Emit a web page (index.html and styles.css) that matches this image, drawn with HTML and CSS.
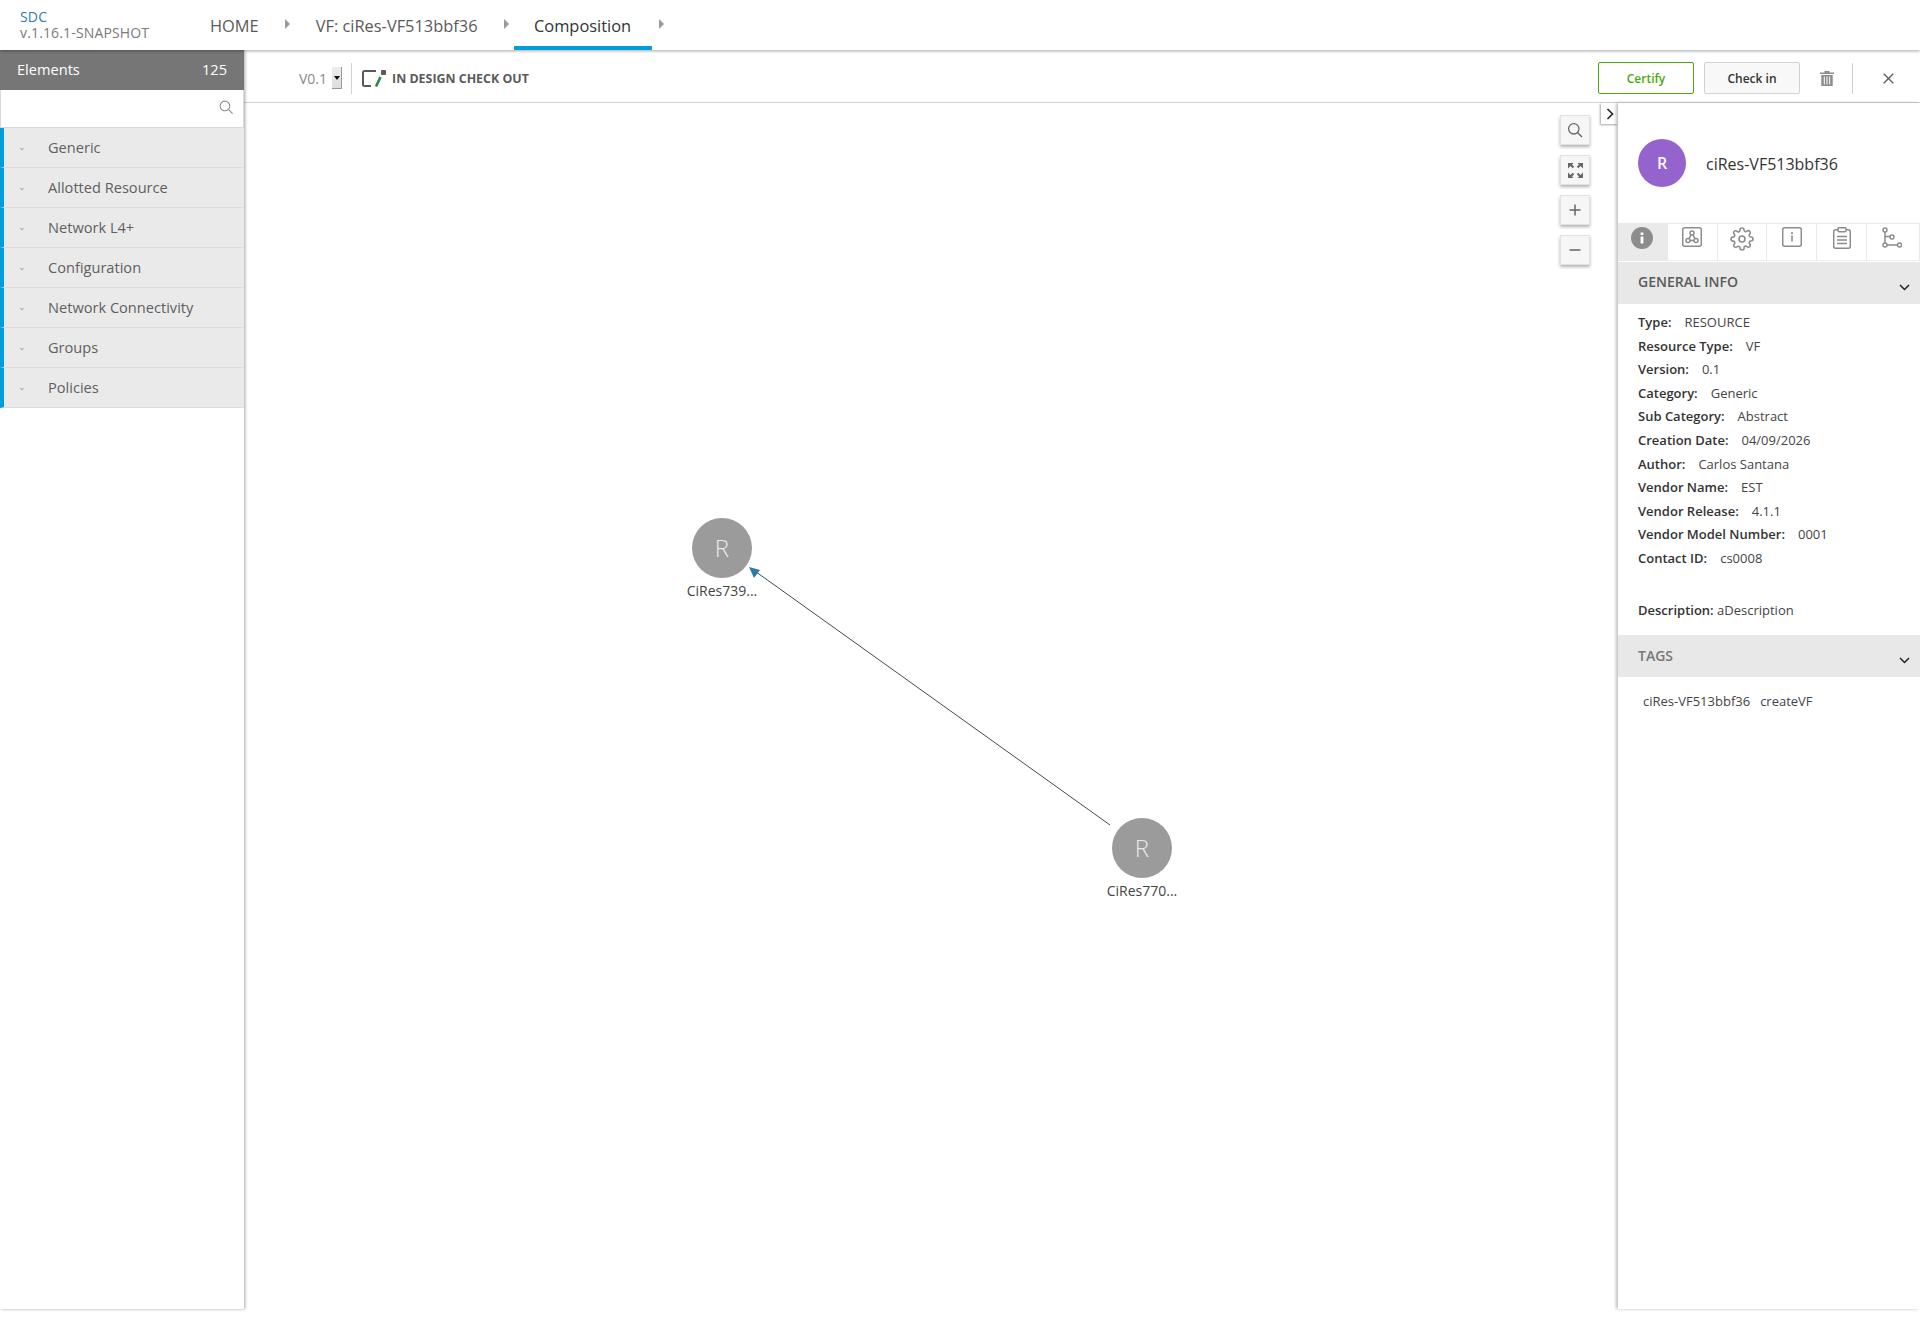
FILE: index.html
```html
<!DOCTYPE html>
<html lang="en">
<head>
    <meta charset="UTF-8">
    <title>SDC</title>
    <link rel="stylesheet" href="styles.css">
</head>
<body>
    <div class="top-nav">
        <div class="brand">
            <div class="brand-name">SDC</div>
            <div class="brand-version">v.1.16.1-SNAPSHOT</div>
        </div>
        <div class="crumb">HOME</div>
        <span class="crumb-arrow"></span>
        <div class="crumb">VF: ciRes-VF513bbf36</div>
        <span class="crumb-arrow crumb-arrow-tight"></span>
        <div class="crumb crumb-active">Composition</div>
        <span class="crumb-arrow crumb-arrow-last"></span>
    </div>

    <div class="workspace">
        <div class="palette">
            <div class="palette-header">
                <span>Elements</span>
                <span>125</span>
            </div>
            <div class="palette-search">
                <svg width="14" height="14" viewBox="0 0 16 16"><circle cx="6.8" cy="6.8" r="5.5" fill="none" stroke="#8c8c8c" stroke-width="1.2"/><path d="M10.8 10.8 15.5 15.5" stroke="#8c8c8c" stroke-width="1.3"/></svg>
            </div>
            <div class="palette-group"><span class="group-caret">&#8964;</span>Generic</div>
            <div class="palette-group"><span class="group-caret">&#8964;</span>Allotted Resource</div>
            <div class="palette-group"><span class="group-caret">&#8964;</span>Network L4+</div>
            <div class="palette-group"><span class="group-caret">&#8964;</span>Configuration</div>
            <div class="palette-group"><span class="group-caret">&#8964;</span>Network Connectivity</div>
            <div class="palette-group"><span class="group-caret">&#8964;</span>Groups</div>
            <div class="palette-group"><span class="group-caret">&#8964;</span>Policies</div>
        </div>

        <div class="main">
            <div class="toolbar">
                <span class="version">V0.1</span>
                <span class="version-select"></span>
                <span class="toolbar-sep"></span>
                <svg class="state-icon" width="24" height="17" viewBox="0 0 24 17">
                    <path d="M14 1H2.5A1.5 1.5 0 0 0 1 2.5v12A1.5 1.5 0 0 0 2.5 16H9" fill="none" stroke="#5a5a5a" stroke-width="2"/>
                    <rect x="19" y="0" width="5" height="5" rx="1" fill="#5a5a5a"/>
                    <path d="M18.5 7 14 16.5" stroke="#1f8a4c" stroke-width="2.6"/>
                </svg>
                <span class="state-label">IN DESIGN CHECK OUT</span>
                <span class="toolbar-fill"></span>
                <button class="btn btn-certify">Certify</button>
                <button class="btn btn-checkin">Check in</button>
                <svg class="trash-icon" width="14" height="16" viewBox="0 0 14 16"><path d="M0 2.5h14v1.6H0zM4.5 1h5v1.5h-5zM1.3 5h11.4v11H1.3z" fill="#8c8c8c"/><path d="M4.3 6.5v8M7 6.5v8M9.7 6.5v8" stroke="#fff" stroke-width="1"/></svg>
                <span class="toolbar-sep toolbar-sep-right"></span>
                <svg width="11" height="11" viewBox="0 0 11 11"><path d="M.7.7l9.6 9.6M10.3.7.7 10.3" stroke="#5a5a5a" stroke-width="1.3"/></svg>
            </div>

            <div class="content">
                <div class="canvas">
                    <svg class="edges" width="1374" height="1206">
                        <line x1="866" y1="722" x2="508" y2="466" stroke="#3f4a52" stroke-width="1"/>
                        <path d="M505 464 516 467 510 475z" fill="#2d7aa3"/>
                    </svg>
                    <div class="node node-a"><div class="node-circle">R</div><div class="node-label">CiRes739...</div></div>
                    <div class="node node-b"><div class="node-circle">R</div><div class="node-label">CiRes770...</div></div>

                    <div class="zoom-tools">
                        <div class="zoom-btn"><svg width="16" height="16" viewBox="0 0 16 16"><circle cx="6.8" cy="6.8" r="5.2" fill="none" stroke="#666" stroke-width="1.3"/><path d="M10.7 10.7 15 15" stroke="#666" stroke-width="1.4"/></svg></div>
                        <div class="zoom-btn"><svg width="15" height="15" viewBox="0 0 15 15" fill="#666"><path d="M0 0h5.500L4 1.500l2.200 2.200-1.500 1.500L2.500 3 0 5.500zM15 0H9.500L11 1.500 8.800 3.700l1.500 1.500L12.500 3 15 5.500zM0 15h5.500L4 13.500l2.200-2.200-1.500-1.500L2.500 12 0 9.500zM15 15H9.500l1.500-1.500-2.200-2.200 1.500-1.500 2.200 2.200L15 9.500z"/></svg></div>
                        <div class="zoom-btn"><svg width="12" height="12" viewBox="0 0 12 12"><path d="M6 .5v11M.5 6h11" stroke="#666" stroke-width="1.5"/></svg></div>
                        <div class="zoom-btn"><svg width="12" height="12" viewBox="0 0 12 12"><path d="M.5 6h11" stroke="#666" stroke-width="1.5"/></svg></div>
                    </div>
                    <div class="collapse-tab"><svg width="8" height="12" viewBox="0 0 8 12"><path d="M1.5 1 6.5 6l-5 5" fill="none" stroke="#222" stroke-width="1.6"/></svg></div>
                </div>

                <div class="details">
                    <div class="details-title">
                        <div class="avatar">R</div>
                        <div class="details-name">ciRes-VF513bbf36</div>
                    </div>
                    <div class="tabs">
                        <div class="tab tab-active">
                            <svg width="22" height="22" viewBox="0 0 22 22"><circle cx="11" cy="11" r="11" fill="#8c8c8c"/><path d="M9.6 9.5h2.8v7H9.6zM9.6 5.5h2.8v2.6H9.6z" fill="#fff"/></svg>
                        </div>
                        <div class="tab">
                            <svg width="20" height="20" viewBox="0 0 20 20" fill="none" stroke="#8c8c8c" stroke-width="1.5"><rect x=".7" y=".7" width="18.6" height="18.6" rx="2"/><circle cx="10" cy="6" r="2"/><circle cx="6" cy="13.5" r="2"/><circle cx="14" cy="13.5" r="2"/><path d="M9 7.8 7 11.8M11 7.800l2 4M8 13.500h4"/></svg>
                        </div>
                        <div class="tab">
                            <svg width="24" height="24" viewBox="0 0 24 24" fill="none" stroke="#8c8c8c" stroke-width="1.6"><circle cx="12" cy="12" r="3"/><path d="M19.4 15a1.65 1.65 0 0 0 .33 1.82l.06.06a2 2 0 0 1 0 2.83 2 2 0 0 1-2.83 0l-.06-.06a1.65 1.65 0 0 0-1.82-.33 1.65 1.65 0 0 0-1 1.51V21a2 2 0 0 1-2 2 2 2 0 0 1-2-2v-.09A1.65 1.65 0 0 0 9 19.4a1.65 1.65 0 0 0-1.82.33l-.06.06a2 2 0 0 1-2.83 0 2 2 0 0 1 0-2.83l.06-.06a1.65 1.65 0 0 0 .33-1.82 1.65 1.65 0 0 0-1.51-1H3a2 2 0 0 1-2-2 2 2 0 0 1 2-2h.09A1.65 1.65 0 0 0 4.6 9a1.65 1.65 0 0 0-.33-1.82l-.06-.06a2 2 0 0 1 0-2.83 2 2 0 0 1 2.83 0l.06.06a1.65 1.65 0 0 0 1.82.33H9a1.65 1.65 0 0 0 1-1.51V3a2 2 0 0 1 2-2 2 2 0 0 1 2 2v.09a1.65 1.65 0 0 0 1 1.51 1.65 1.65 0 0 0 1.82-.33l.06-.06a2 2 0 0 1 2.83 0 2 2 0 0 1 0 2.83l-.06.06a1.65 1.65 0 0 0-.33 1.82V9a1.65 1.65 0 0 0 1.51 1H21a2 2 0 0 1 2 2 2 2 0 0 1-2 2h-.09a1.65 1.65 0 0 0-1.51 1z"/></svg>
                        </div>
                        <div class="tab">
                            <svg width="20" height="20" viewBox="0 0 20 20" fill="none" stroke="#8c8c8c" stroke-width="1.5"><rect x=".7" y=".7" width="18.6" height="18.6" rx="2"/><path d="M10 8.5v6M10 5v2" stroke-width="1.6"/></svg>
                        </div>
                        <div class="tab">
                            <svg width="18" height="22" viewBox="0 0 18 22" fill="none" stroke="#8c8c8c" stroke-width="1.5"><rect x=".7" y="2.7" width="16.6" height="18.6" rx="2"/><rect x="5" y=".7" width="8" height="4" rx="1" fill="#fff"/><path d="M4 9.5h10M4 13h10M4 16.500h10"/></svg>
                        </div>
                        <div class="tab tab-branch">
                            <svg width="20" height="22" viewBox="0 0 20 22" fill="none" stroke="#8c8c8c" stroke-width="1.5"><circle cx="3" cy="3" r="2"/><circle cx="3" cy="18" r="2"/><circle cx="10" cy="10" r="2"/><circle cx="17.5" cy="18" r="2"/><path d="M3 5v11M3 9.500h5M5 18h10.500"/></svg>
                        </div>
                    </div>

                    <div class="section-header section-general">GENERAL INFO<svg class="chevron" width="11" height="7" viewBox="0 0 11 7"><path d="M1 1l4.5 4.5L10 1" fill="none" stroke="#222" stroke-width="1.5"/></svg></div>
                    <div class="info">
                        <div class="info-row"><b>Type:</b>RESOURCE</div>
                        <div class="info-row"><b>Resource Type:</b>VF</div>
                        <div class="info-row"><b>Version:</b>0.1</div>
                        <div class="info-row"><b>Category:</b>Generic</div>
                        <div class="info-row"><b>Sub Category:</b>Abstract</div>
                        <div class="info-row"><b>Creation Date:</b>04/09/2026</div>
                        <div class="info-row"><b>Author:</b>Carlos Santana</div>
                        <div class="info-row"><b>Vendor Name:</b>EST</div>
                        <div class="info-row"><b>Vendor Release:</b>4.1.1</div>
                        <div class="info-row"><b>Vendor Model Number:</b>0001</div>
                        <div class="info-row"><b>Contact ID:</b>cs0008</div>
                        <div class="info-desc"><b>Description:</b> aDescription</div>
                    </div>
                    <div class="section-header section-tags">TAGS<svg class="chevron" width="11" height="7" viewBox="0 0 11 7"><path d="M1 1l4.5 4.5L10 1" fill="none" stroke="#222" stroke-width="1.5"/></svg></div>
                    <div class="tags"><span>ciRes-VF513bbf36</span><span>createVF</span></div>
                </div>
            </div>
        </div>
    </div>
</body>
</html>
```
FILE: styles.css
```css
* {
    box-sizing: border-box;
}
html, body {
    margin: 0;
    height: 100%;
}
body {
    font-family: "Open Sans", sans-serif;
    background-color: #fff;
    color: #333;
    overflow: hidden;
}
.top-nav {
    display: flex;
    align-items: flex-start;
    height: 50px;
    padding-left: 20px;
    background-color: #fff;
    box-shadow: 0 1px 3px rgba(0,0,0,0.35);
    position: relative;
    z-index: 3;
}
.brand {
    width: 190px;
    padding-top: 9px;
    font-size: 14px;
    line-height: 16px;
    letter-spacing: 0.15px;
    white-space: nowrap;
}
.brand-name {
    color: #2f7ab8;
}
.brand-version {
    color: #7a7a7a;
}
.crumb {
    height: 50px;
    line-height: 52px;
    font-size: 16.4px;
    color: #5a5a5a;
}
.crumb-active {
    width: 138px;
    text-align: center;
    color: #333;
    font-weight: 500;
    border-bottom: 4px solid #009fdb;
}
.crumb-arrow {
    width: 0;
    height: 0;
    margin: 19px 26px 0 26px;
    border-left: 5px solid #999;
    border-top: 5px solid transparent;
    border-bottom: 5px solid transparent;
}
.crumb-arrow-tight {
    margin-right: 5px;
}
.crumb-arrow-last {
    margin-left: 7px;
}
.workspace {
    display: flex;
    height: 1259px;
}
.palette {
    width: 244px;
    flex-shrink: 0;
    box-shadow: 1px 0 3px rgba(0,0,0,0.35);
    position: relative;
    z-index: 2;
    background-color: #fff;
}
.palette-header {
    display: flex;
    justify-content: space-between;
    height: 40px;
    padding: 8px 17px;
    background-color: #767676;
    color: #fff;
    font-size: 14.6px;
    line-height: 22px;
}
.palette-search {
    display: flex;
    justify-content: flex-end;
    align-items: center;
    height: 38px;
    padding: 0 10px 4px 0;
    border: 1px solid #d8d8d8;
    border-top: 0;
}
.palette-group {
    height: 40px;
    line-height: 39px;
    border-left: 4px solid #009fdb;
    border-bottom: 1px solid #dcdcdc;
    background-color: #eaeaea;
    color: #5f5f5f;
    font-size: 14.6px;
    font-weight: 500;
    display: flex;
}
.group-caret {
    width: 44px;
    padding-left: 14px;
    font-size: 9px;
    line-height: 38px;
    color: #999;
}
.main {
    flex: 1;
    display: flex;
    flex-direction: column;
    min-width: 0;
}
.toolbar {
    display: flex;
    align-items: center;
    height: 53px;
    padding: 4px 26px 0 55px;
    border-bottom: 1px solid #d2d2d2;
}
.version {
    font-size: 14px;
    color: #8a8a8a;
    margin-right: 5px;
}
.version-select {
    width: 10px;
    height: 22px;
    background: linear-gradient(#eee, #ddd);
    border-right: 1px solid #999;
    border-bottom: 1px solid #999;
    position: relative;
    margin-right: 9px;
}
.version-select::after {
    content: "";
    position: absolute;
    top: 9px;
    left: 2px;
    border-left: 3px solid transparent;
    border-right: 3px solid transparent;
    border-top: 4px solid #111;
}
.toolbar-sep {
    width: 1px;
    height: 31px;
    background-color: #d2d2d2;
    margin-right: 10px;
}
.state-icon {
    margin-right: 6px;
}
.state-label {
    font-size: 12.4px;
    font-weight: 700;
    color: #5a5a5a;
}
.toolbar-fill {
    flex: 1;
}
.btn {
    width: 96px;
    height: 32px;
    padding: 0;
    border-radius: 2px;
    font-family: inherit;
    font-size: 12px;
    font-weight: 600;
}
.btn-certify {
    background-color: #fff;
    border: 1px solid #4ca90c;
    color: #4ca90c;
    margin-right: 10px;
}
.btn-checkin {
    background-color: #f8f8f8;
    border: 1px solid #d2d2d2;
    color: #333;
    margin-right: 20px;
}
.trash-icon {
    margin-right: 18px;
}
.toolbar-sep-right {
    margin-right: 30px;
}
.content {
    flex: 1;
    display: flex;
    min-height: 0;
}
.canvas {
    flex: 1;
    position: relative;
}
.edges {
    position: absolute;
    left: 0;
    top: 0;
}
.node {
    position: absolute;
    width: 100px;
    text-align: center;
}
.node-a {
    left: 428px;
    top: 415px;
}
.node-b {
    left: 848px;
    top: 715px;
}
.node-circle {
    width: 60px;
    height: 60px;
    margin: 0 auto;
    border-radius: 50%;
    background-color: #9b9b9b;
    color: #e9e9e9;
    font-size: 24px;
    font-weight: 300;
    line-height: 60px;
}
.node-label {
    margin-top: 1px;
    font-size: 14px;
    line-height: 24px;
    color: #444;
}
.zoom-tools {
    position: absolute;
    top: 12px;
    right: 28px;
    display: flex;
    flex-direction: column;
    gap: 10px;
}
.zoom-btn {
    display: flex;
    justify-content: center;
    align-items: center;
    width: 30px;
    height: 30px;
    background-color: #f6f6f6;
    border: 1px solid #e2e2e2;
    box-shadow: 0 2px 3px rgba(0,0,0,0.3);
}
.collapse-tab {
    display: flex;
    justify-content: center;
    align-items: center;
    position: absolute;
    top: 0;
    right: 0;
    width: 17px;
    height: 21px;
    background-color: #fff;
    box-shadow: -1px 1px 2px rgba(0,0,0,0.35);
}
.details {
    width: 302px;
    flex-shrink: 0;
    box-shadow: -2px 0 3px rgba(0,0,0,0.25);
    position: relative;
}
.details-title {
    display: flex;
    align-items: center;
    height: 120px;
    padding-left: 20px;
}
.avatar {
    width: 48px;
    height: 48px;
    border-radius: 50%;
    background-color: #9463cd;
    color: #fff;
    text-align: center;
    font-size: 16px;
    font-weight: 600;
    line-height: 48px;
    margin-right: 20px;
}
.details-name {
    font-size: 16px;
    line-height: 24px;
    padding-top: 1px;
    color: #333;
}
.tabs {
    display: flex;
    height: 38px;
    border-top: 1px solid #eaeaea;
    border-bottom: 1px solid #eaeaea;
}
.tab {
    display: flex;
    justify-content: center;
    align-items: flex-start;
    padding-top: 3px;
    flex: 1 1 0;
    border-right: 1px solid #eaeaea;
}
.tab-active {
    background-color: #eaeaea;
}
.tab-branch {
    padding-right: 3px;
}
.section-header {
    position: relative;
    background-color: #e8e8e8;
    color: #5a5a5a;
    font-size: 14px;
    font-weight: 600;
    padding-left: 20px;
}
.section-general {
    height: 42px;
    margin-top: 1px;
    line-height: 40px;
}
.section-tags {
    height: 42px;
    line-height: 41px;
    color: #777;
}
.chevron {
    position: absolute;
    right: 10px;
    top: 22px;
}
.info {
    height: 331px;
    padding: 6px 20px 0;
    font-size: 13px;
    color: #444;
}
.info-row {
    height: 23.6px;
    line-height: 24px;
}
.info-row b {
    font-weight: 600;
    color: #333;
    margin-right: 13px;
}
.info-desc {
    margin-top: 28px;
    line-height: 24px;
}
.info-desc b {
    font-weight: 600;
    color: #333;
}
.tags {
    padding: 12px 25px 0;
    font-size: 13px;
    line-height: 24px;
    color: #444;
}
.tags span {
    margin-right: 10px;
}
```
